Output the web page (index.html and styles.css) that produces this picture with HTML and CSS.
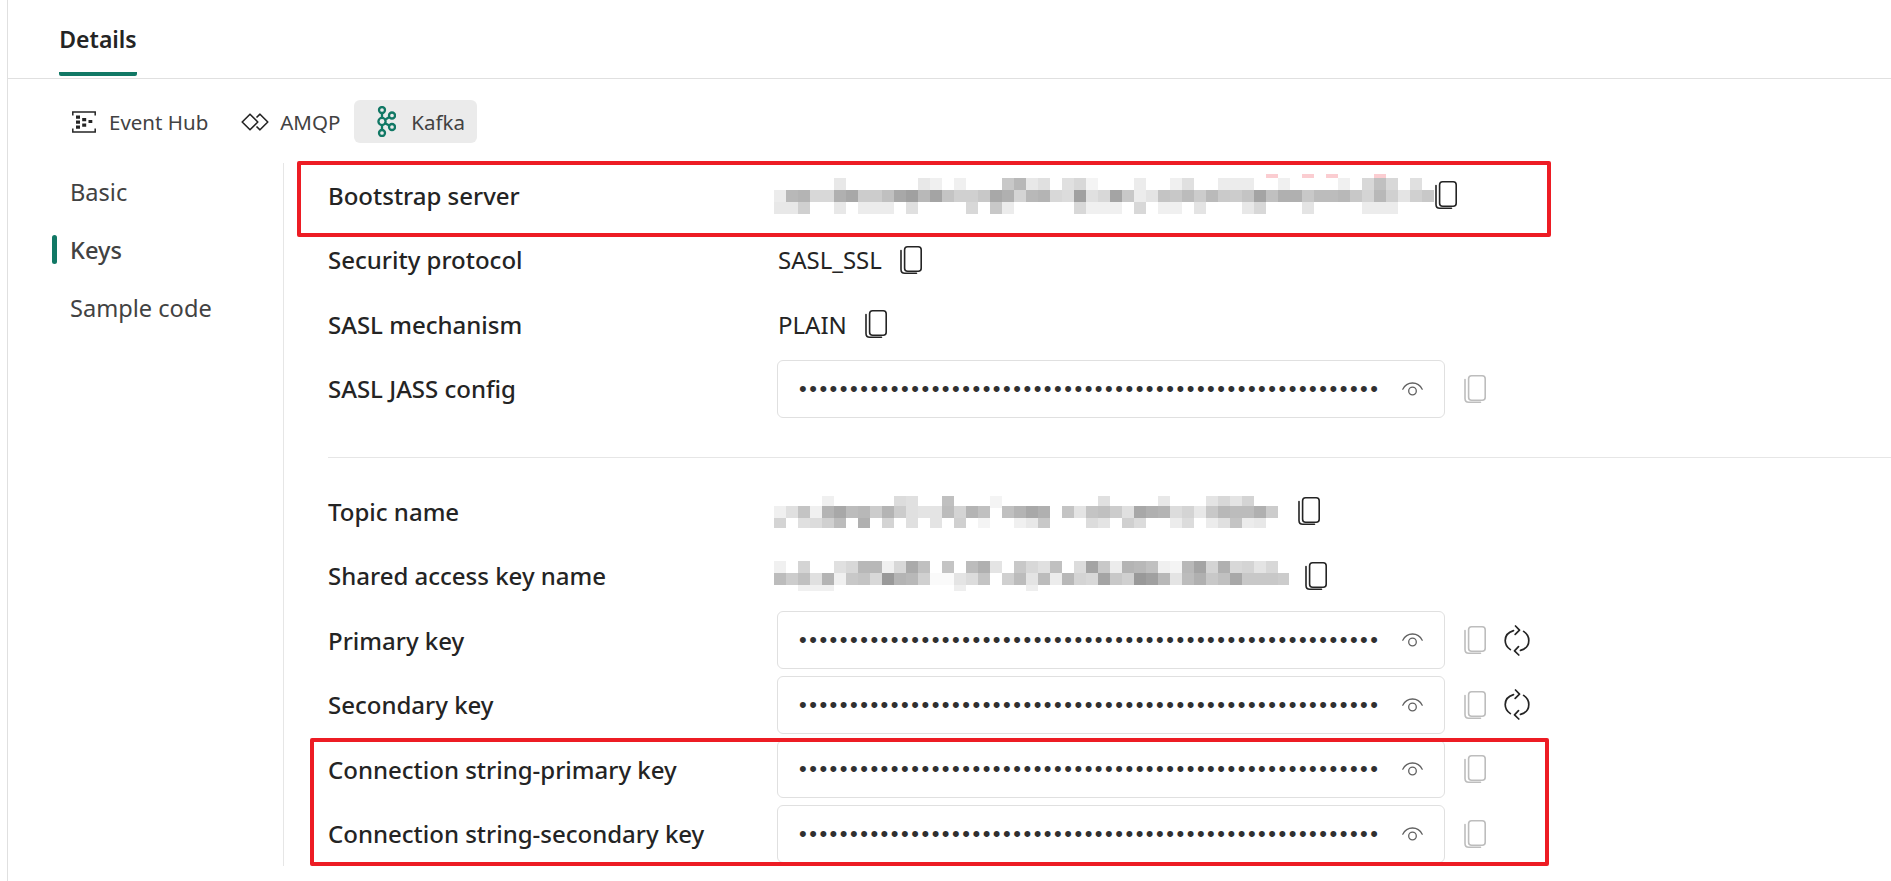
FILE: index.html
```html
<!DOCTYPE html>
<html lang="en">
<head>
    <meta charset="UTF-8">
    <title>Details</title>
    <link rel="stylesheet" href="styles.css">
</head>
<body>
    <svg class="defs" width="0" height="0">
        <symbol id="copy" viewBox="0 0 22 28">
            <rect x="4.6" y="0.8" width="16.6" height="24.4" rx="3" fill="none" stroke="currentColor" stroke-width="1.6"/>
            <path d="M1 4.5V23.5C1 25.8 2.6 27.2 4.8 27.2H16.5" fill="none" stroke="currentColor" stroke-width="1.6" stroke-linecap="round"/>
        </symbol>
        <symbol id="eye" viewBox="0 0 21 14">
            <path d="M0.8 7.2C2.8 3.2 6.2 1 10.5 1C14.8 1 18.2 3.2 20.2 7.2" fill="none" stroke="currentColor" stroke-width="1.3" stroke-linecap="round"/>
            <circle cx="10.5" cy="9" r="3.8" fill="none" stroke="currentColor" stroke-width="1.3"/>
        </symbol>
        <symbol id="refresh" viewBox="0 0 26 31">
            <path d="M9.5 5.6C4.6 7 1.2 10.6 1.2 15.6C1.2 19.4 3.2 22.6 6.4 24.6" fill="none" stroke="currentColor" stroke-width="1.7" stroke-linecap="round"/>
            <path d="M16.5 25.4C21.4 24 24.8 20.4 24.8 15.4C24.8 11.6 22.8 8.4 19.6 6.4" fill="none" stroke="currentColor" stroke-width="1.7" stroke-linecap="round"/>
            <path d="M11.5 1L15.5 5.2L11.2 9.4M14.5 21.6L10.5 25.8L14.8 30" fill="none" stroke="currentColor" stroke-width="1.7" stroke-linecap="round" stroke-linejoin="round"/>
        </symbol>
    </svg>

    <div class="page">
        <div class="tab-strip">
            <div class="tab-main">Details</div>
        </div>

        <div class="sub-tabs">
            <div class="sub-tab">
                <svg class="ic-hub" viewBox="0 0 24 22" fill="none" stroke="#242424" stroke-width="1.5">
                    <path d="M0.8 4.5V1H23.2V4.5M0.8 17.5V21H23.2V17.5"/>
                    <path d="M4 4.5h4v3.2H4zM4 9.5h4v3.2H4zM4 14.5h4v3.2H4zM10.2 7h4v3.2h-4zM10.2 12.5h4v3.2h-4zM16.5 9h3.8v3h-3.8z" fill="#242424" stroke="none"/>
                </svg>
                Event Hub
            </div>
            <div class="sub-tab">
                <svg class="ic-amqp" viewBox="0 0 28 18" fill="none" stroke="#242424" stroke-width="1.6" stroke-linejoin="round">
                    <path d="M9 1.2L16.8 9L9 16.8L1.2 9Z"/>
                    <path d="M15.5 4.5L19 1.2L26.8 9L19 16.8L15.5 13.5"/>
                </svg>
                AMQP
            </div>
            <div class="sub-tab selected">
                <svg class="ic-kafka" viewBox="0 0 20 31" fill="none" stroke="#117865" stroke-width="2.3">
                    <circle cx="6" cy="4" r="3"/>
                    <circle cx="6" cy="15.5" r="3.6"/>
                    <circle cx="6" cy="27" r="3"/>
                    <circle cx="16" cy="9.5" r="3"/>
                    <circle cx="16" cy="21" r="3"/>
                    <path d="M6 7V12M6 19V24M9 13.8L13.4 11M9 17.2L13.4 19.6"/>
                </svg>
                Kafka
            </div>
        </div>

        <div class="body">
            <nav class="side-nav">
                <div class="nav-item">Basic</div>
                <div class="nav-item active">Keys</div>
                <div class="nav-item">Sample code</div>
            </nav>

            <main class="fields">
                <div class="field">
                    <div class="field-label">Bootstrap server</div>
                    <div class="field-value">
                        <svg class="blur" width="661" height="42" viewBox="0 0 661 42">
                            <g class="pink"><rect x="492" y="0"/><rect x="528" y="0"/><rect x="552" y="0"/><rect x="600" y="0"/></g>
                            <rect x="60" y="4" fill="#e8e8e8"/><rect x="144" y="4" fill="#e8e8e8"/><rect x="156" y="4" fill="#f0f0f0"/><rect x="180" y="4" fill="#f0f0f0"/><rect x="228" y="4" fill="#c8c8c8"/><rect x="240" y="4" fill="#b8b8b8"/><rect x="252" y="4" fill="#e8e8e8"/><rect x="264" y="4" fill="#e0e0e0"/><rect x="288" y="4" fill="#e0e0e0"/><rect x="300" y="4" fill="#d8d8d8"/><rect x="312" y="4" fill="#f4f4f4"/><rect x="360" y="4" fill="#ececec"/><rect x="396" y="4" fill="#f0f0f0"/><rect x="408" y="4" fill="#e0e0e0"/><rect x="444" y="4" fill="#ececec"/><rect x="456" y="4" fill="#ececec"/><rect x="468" y="4" fill="#ececec"/><rect x="504" y="4" fill="#f0f0f0"/><rect x="564" y="4" fill="#f0f0f0"/><rect x="588" y="4" fill="#d8d8d8"/><rect x="600" y="4" fill="#c0c0c0"/><rect x="612" y="4" fill="#d8d8d8"/><rect x="636" y="4" fill="#e0e0e0"/>
                            <rect x="0" y="16" fill="#ececec"/><rect x="12" y="16" fill="#b8b8b8"/><rect x="24" y="16" fill="#b4b4b4"/><rect x="36" y="16" fill="#d8d8d8"/><rect x="48" y="16" fill="#d8d8d8"/><rect x="60" y="16" fill="#b0b0b0"/><rect x="72" y="16" fill="#a8a8a8"/><rect x="84" y="16" fill="#cccccc"/><rect x="96" y="16" fill="#cccccc"/><rect x="108" y="16" fill="#c0c0c0"/><rect x="120" y="16" fill="#a8a8a8"/><rect x="132" y="16" fill="#a0a0a0"/><rect x="144" y="16" fill="#b8b8b8"/><rect x="156" y="16" fill="#a4a4a4"/><rect x="168" y="16" fill="#c4c4c4"/><rect x="180" y="16" fill="#d0d0d0"/><rect x="192" y="16" fill="#d0d0d0"/><rect x="204" y="16" fill="#c8c8c8"/><rect x="216" y="16" fill="#a8a8a8"/><rect x="228" y="16" fill="#b0b0b0"/><rect x="240" y="16" fill="#d4d4d4"/><rect x="252" y="16" fill="#b8b8b8"/><rect x="264" y="16" fill="#b4b4b4"/><rect x="276" y="16" fill="#d8d8d8"/><rect x="288" y="16" fill="#dcdcdc"/><rect x="300" y="16" fill="#a0a0a0"/><rect x="312" y="16" fill="#e0e0e0"/><rect x="324" y="16" fill="#d8d8d8"/><rect x="336" y="16" fill="#a4a4a4"/><rect x="348" y="16" fill="#c8c8c8"/><rect x="360" y="16" fill="#ececec"/><rect x="372" y="16" fill="#e4e4e4"/><rect x="384" y="16" fill="#c4c4c4"/><rect x="396" y="16" fill="#c8c8c8"/><rect x="408" y="16" fill="#bcbcbc"/><rect x="420" y="16" fill="#cccccc"/><rect x="432" y="16" fill="#bababa"/><rect x="444" y="16" fill="#cacaca"/><rect x="456" y="16" fill="#cccccc"/><rect x="468" y="16" fill="#c4c4c4"/><rect x="480" y="16" fill="#a4a4a4"/><rect x="492" y="16" fill="#c0c0c0"/><rect x="504" y="16" fill="#b0b0b0"/><rect x="516" y="16" fill="#b0b0b0"/><rect x="528" y="16" fill="#c8c8c8"/><rect x="540" y="16" fill="#bcbcbc"/><rect x="552" y="16" fill="#bcbcbc"/><rect x="564" y="16" fill="#b8b8b8"/><rect x="576" y="16" fill="#c8c8c8"/><rect x="588" y="16" fill="#d4d4d4"/><rect x="600" y="16" fill="#b8b8b8"/><rect x="612" y="16" fill="#d0d0d0"/><rect x="624" y="16" fill="#e4e4e4"/><rect x="636" y="16" fill="#d0d0d0"/><rect x="648" y="16" fill="#c8c8c8"/>
                            <rect x="0" y="28" fill="#e8e8e8"/><rect x="12" y="28" fill="#e8e8e8"/><rect x="24" y="28" fill="#d0d0d0"/><rect x="60" y="28" fill="#e8e8e8"/><rect x="84" y="28" fill="#ececec"/><rect x="96" y="28" fill="#ececec"/><rect x="108" y="28" fill="#ececec"/><rect x="132" y="28" fill="#e0e0e0"/><rect x="192" y="28" fill="#d8d8d8"/><rect x="216" y="28" fill="#c8c8c8"/><rect x="228" y="28" fill="#ececec"/><rect x="300" y="28" fill="#d8d8d8"/><rect x="312" y="28" fill="#f0f0f0"/><rect x="324" y="28" fill="#f0f0f0"/><rect x="336" y="28" fill="#f0f0f0"/><rect x="360" y="28" fill="#d8d8d8"/><rect x="384" y="28" fill="#f0f0f0"/><rect x="396" y="28" fill="#f0f0f0"/><rect x="420" y="28" fill="#e4e4e4"/><rect x="468" y="28" fill="#e8e8e8"/><rect x="480" y="28" fill="#d8d8d8"/><rect x="528" y="28" fill="#e4e4e4"/><rect x="588" y="28" fill="#ececec"/><rect x="600" y="28" fill="#ececec"/><rect x="612" y="28" fill="#ececec"/>
                        </svg>
                        <svg class="ic-copy"><use href="#copy"/></svg>
                    </div>
                </div>
                <div class="field">
                    <div class="field-label">Security protocol</div>
                    <div class="field-value"><span class="plain-value">SASL_SSL</span><svg class="ic-copy gap"><use href="#copy"/></svg></div>
                </div>
                <div class="field">
                    <div class="field-label">SASL mechanism</div>
                    <div class="field-value"><span class="plain-value">PLAIN</span><svg class="ic-copy gap"><use href="#copy"/></svg></div>
                </div>
                <div class="field">
                    <div class="field-label">SASL JASS config</div>
                    <div class="field-value">
                        <div class="secret">
                            <div class="dots">•••••••••••••••••••••••••••••••••••••••••••••••••••••••••</div>
                            <svg class="ic-eye"><use href="#eye"/></svg>
                        </div>
                        <svg class="ic-copy off"><use href="#copy"/></svg>
                    </div>
                </div>

                <hr class="divider">

                <div class="field">
                    <div class="field-label">Topic name</div>
                    <div class="field-value">
                        <svg class="blur" width="506" height="34" viewBox="0 0 506 34">
                            <rect x="48" y="2" fill="#f0f0f0"/><rect x="120" y="2" fill="#dcdcdc"/><rect x="132" y="2" fill="#e0e0e0"/><rect x="168" y="2" fill="#c0c0c0"/><rect x="216" y="2" fill="#f4f4f4"/><rect x="324" y="2" fill="#e0e0e0"/><rect x="384" y="2" fill="#e8e8e8"/><rect x="432" y="2" fill="#e4e4e4"/><rect x="444" y="2" fill="#d8d8d8"/><rect x="456" y="2" fill="#e4e4e4"/><rect x="468" y="2" fill="#d4d4d4"/>
                            <rect x="0" y="12" fill="#f0f0f0"/><rect x="12" y="12" fill="#e0e0e0"/><rect x="24" y="12" fill="#c4c4c4"/><rect x="36" y="12" fill="#f0f0f0"/><rect x="48" y="12" fill="#b4b4b4"/><rect x="60" y="12" fill="#a8a8a8"/><rect x="72" y="12" fill="#bcbcbc"/><rect x="84" y="12" fill="#b8b8b8"/><rect x="96" y="12" fill="#cccccc"/><rect x="108" y="12" fill="#b4b4b4"/><rect x="120" y="12" fill="#cccccc"/><rect x="132" y="12" fill="#e0e0e0"/><rect x="144" y="12" fill="#e4e4e4"/><rect x="156" y="12" fill="#e4e4e4"/><rect x="168" y="12" fill="#bcbcbc"/><rect x="180" y="12" fill="#d4d4d4"/><rect x="192" y="12" fill="#b4b4b4"/><rect x="204" y="12" fill="#c0c0c0"/><rect x="228" y="12" fill="#c0c0c0"/><rect x="240" y="12" fill="#b4b4b4"/><rect x="252" y="12" fill="#a8a8a8"/><rect x="264" y="12" fill="#b0b0b0"/><rect x="288" y="12" fill="#c4c4c4"/><rect x="300" y="12" fill="#e4e4e4"/><rect x="312" y="12" fill="#c4c4c4"/><rect x="324" y="12" fill="#c0c0c0"/><rect x="336" y="12" fill="#cccccc"/><rect x="348" y="12" fill="#e0e0e0"/><rect x="360" y="12" fill="#a8a8a8"/><rect x="372" y="12" fill="#b0b0b0"/><rect x="384" y="12" fill="#b4b4b4"/><rect x="396" y="12" fill="#dcdcdc"/><rect x="408" y="12" fill="#d4d4d4"/><rect x="420" y="12" fill="#e8e8e8"/><rect x="432" y="12" fill="#c8c8c8"/><rect x="444" y="12" fill="#b8b8b8"/><rect x="456" y="12" fill="#bcbcbc"/><rect x="468" y="12" fill="#bcbcbc"/><rect x="480" y="12" fill="#b0b0b0"/><rect x="492" y="12" fill="#cccccc"/>
                            <rect x="0" y="24" fill="#d4d4d4"/><rect x="24" y="24" fill="#e0e0e0"/><rect x="36" y="24" fill="#dcdcdc"/><rect x="48" y="24" fill="#d0d0d0"/><rect x="60" y="24" fill="#bcbcbc"/><rect x="84" y="24" fill="#b0b0b0"/><rect x="108" y="24" fill="#d4d4d4"/><rect x="132" y="24" fill="#e0e0e0"/><rect x="156" y="24" fill="#e4e4e4"/><rect x="180" y="24" fill="#d0d0d0"/><rect x="204" y="24" fill="#f4f4f4"/><rect x="240" y="24" fill="#f0f0f0"/><rect x="252" y="24" fill="#e8e8e8"/><rect x="264" y="24" fill="#c8c8c8"/><rect x="312" y="24" fill="#dcdcdc"/><rect x="324" y="24" fill="#e4e4e4"/><rect x="348" y="24" fill="#d0d0d0"/><rect x="360" y="24" fill="#dcdcdc"/><rect x="396" y="24" fill="#ececec"/><rect x="408" y="24" fill="#dcdcdc"/><rect x="432" y="24" fill="#ececec"/><rect x="444" y="24" fill="#e0e0e0"/><rect x="456" y="24" fill="#c4c4c4"/><rect x="468" y="24" fill="#ececec"/><rect x="480" y="24" fill="#e8e8e8"/>
                        </svg>
                        <svg class="ic-copy gap"><use href="#copy"/></svg>
                    </div>
                </div>
                <div class="field">
                    <div class="field-label">Shared access key name</div>
                    <div class="field-value">
                        <svg class="blur" width="515" height="34" viewBox="0 0 515 34">
                            <rect x="0" y="2" fill="#f0f0f0"/><rect x="24" y="2" fill="#d4d4d4"/><rect x="60" y="2" fill="#e0e0e0"/><rect x="72" y="2" fill="#d8d8d8"/><rect x="84" y="2" fill="#b8b8b8"/><rect x="96" y="2" fill="#b8b8b8"/><rect x="108" y="2" fill="#f0f0f0"/><rect x="120" y="2" fill="#d8d8d8"/><rect x="132" y="2" fill="#aaaaaa"/><rect x="144" y="2" fill="#c0c0c0"/><rect x="168" y="2" fill="#c4c4c4"/><rect x="192" y="2" fill="#bcbcbc"/><rect x="204" y="2" fill="#b0b0b0"/><rect x="216" y="2" fill="#e4e4e4"/><rect x="240" y="2" fill="#c8c8c8"/><rect x="252" y="2" fill="#d8d8d8"/><rect x="264" y="2" fill="#e0e0e0"/><rect x="276" y="2" fill="#c0c0c0"/><rect x="300" y="2" fill="#dcdcdc"/><rect x="312" y="2" fill="#a4a4a4"/><rect x="324" y="2" fill="#c8c8c8"/><rect x="336" y="2" fill="#ececec"/><rect x="348" y="2" fill="#b4b4b4"/><rect x="360" y="2" fill="#b8b8b8"/><rect x="372" y="2" fill="#c0c0c0"/><rect x="384" y="2" fill="#f0f0f0"/><rect x="396" y="2" fill="#f4f4f4"/><rect x="408" y="2" fill="#b8b8b8"/><rect x="420" y="2" fill="#a4a4a4"/><rect x="432" y="2" fill="#d4d4d4"/><rect x="444" y="2" fill="#b0b0b0"/><rect x="456" y="2" fill="#d8d8d8"/><rect x="468" y="2" fill="#d4d4d4"/><rect x="480" y="2" fill="#e4e4e4"/><rect x="492" y="2" fill="#d8d8d8"/>
                            <rect x="0" y="14" fill="#bcbcbc"/><rect x="12" y="14" fill="#cccccc"/><rect x="24" y="14" fill="#c0c0c0"/><rect x="36" y="14" fill="#e0e0e0"/><rect x="48" y="14" fill="#b4b4b4"/><rect x="60" y="14" fill="#f0f0f0"/><rect x="72" y="14" fill="#c8c8c8"/><rect x="84" y="14" fill="#c4c4c4"/><rect x="96" y="14" fill="#d8d8d8"/><rect x="108" y="14" fill="#999999"/><rect x="120" y="14" fill="#b4b4b4"/><rect x="132" y="14" fill="#b8b8b8"/><rect x="144" y="14" fill="#d0d0d0"/><rect x="156" y="14" fill="#fafafa"/><rect x="168" y="14" fill="#fafafa"/><rect x="180" y="14" fill="#e4e4e4"/><rect x="192" y="14" fill="#dcdcdc"/><rect x="204" y="14" fill="#c4c4c4"/><rect x="228" y="14" fill="#d0d0d0"/><rect x="240" y="14" fill="#bcbcbc"/><rect x="252" y="14" fill="#e4e4e4"/><rect x="264" y="14" fill="#bcbcbc"/><rect x="276" y="14" fill="#ececec"/><rect x="288" y="14" fill="#b8b8b8"/><rect x="300" y="14" fill="#d4d4d4"/><rect x="312" y="14" fill="#d8d8d8"/><rect x="324" y="14" fill="#a4a4a4"/><rect x="336" y="14" fill="#c8c8c8"/><rect x="348" y="14" fill="#d0d0d0"/><rect x="360" y="14" fill="#999999"/><rect x="372" y="14" fill="#a0a0a0"/><rect x="384" y="14" fill="#b8b8b8"/><rect x="396" y="14" fill="#e4e4e4"/><rect x="408" y="14" fill="#bcbcbc"/><rect x="420" y="14" fill="#b0b0b0"/><rect x="432" y="14" fill="#c8c8c8"/><rect x="444" y="14" fill="#c0c0c0"/><rect x="456" y="14" fill="#a8a8a8"/><rect x="468" y="14" fill="#c8c8c8"/><rect x="480" y="14" fill="#c8c8c8"/><rect x="492" y="14" fill="#c8c8c8"/><rect x="504" y="14" width="11" fill="#cccccc"/>
                            <g class="thin"><rect x="24" y="26" fill="#f0f0f0"/><rect x="36" y="26" fill="#f0f0f0"/><rect x="48" y="26" fill="#f0f0f0"/><rect x="180" y="26" fill="#eeeeee"/><rect x="252" y="26" fill="#eeeeee"/></g>
                        </svg>
                        <svg class="ic-copy gap-wide"><use href="#copy"/></svg>
                    </div>
                </div>
                <div class="field">
                    <div class="field-label">Primary key</div>
                    <div class="field-value">
                        <div class="secret">
                            <div class="dots">•••••••••••••••••••••••••••••••••••••••••••••••••••••••••</div>
                            <svg class="ic-eye"><use href="#eye"/></svg>
                        </div>
                        <svg class="ic-copy off"><use href="#copy"/></svg>
                        <svg class="ic-refresh"><use href="#refresh"/></svg>
                    </div>
                </div>
                <div class="field">
                    <div class="field-label">Secondary key</div>
                    <div class="field-value">
                        <div class="secret">
                            <div class="dots">•••••••••••••••••••••••••••••••••••••••••••••••••••••••••</div>
                            <svg class="ic-eye"><use href="#eye"/></svg>
                        </div>
                        <svg class="ic-copy off"><use href="#copy"/></svg>
                        <svg class="ic-refresh"><use href="#refresh"/></svg>
                    </div>
                </div>
                <div class="field">
                    <div class="field-label">Connection string-primary key</div>
                    <div class="field-value">
                        <div class="secret">
                            <div class="dots">•••••••••••••••••••••••••••••••••••••••••••••••••••••••••</div>
                            <svg class="ic-eye"><use href="#eye"/></svg>
                        </div>
                        <svg class="ic-copy off"><use href="#copy"/></svg>
                    </div>
                </div>
                <div class="field">
                    <div class="field-label">Connection string-secondary key</div>
                    <div class="field-value">
                        <div class="secret">
                            <div class="dots">•••••••••••••••••••••••••••••••••••••••••••••••••••••••••</div>
                            <svg class="ic-eye"><use href="#eye"/></svg>
                        </div>
                        <svg class="ic-copy off"><use href="#copy"/></svg>
                    </div>
                </div>
            </main>
        </div>
    </div>

    <!-- red annotation boxes drawn over the screenshot -->
    <div class="mark mark-top"></div>
    <div class="mark mark-bottom"></div>
</body>
</html>
```

FILE: styles.css
```css
html, body {
    margin: 0;
    height: 881px;
    overflow: hidden;
    background-color: #ffffff;
}
body {
    position: relative;
    font-family: "Noto Sans", "Open Sans", sans-serif;
    color: #242424;
}
.defs {
    position: absolute;
}
.page {
    margin-left: 7px;
    height: 881px;
    border-left: 1px solid #e0e0e0;
}
.tab-strip {
    height: 79px;
    padding-left: 51px;
    border-bottom: 1px solid #e0e0e0;
    box-sizing: border-box;
}
.tab-main {
    width: 78px;
    height: 76px;
    line-height: 78px;
    font-size: 23px;
    font-weight: 600;
    text-align: center;
    border-bottom: 4px solid #117865;
    border-radius: 2px;
    box-sizing: border-box;
}
.sub-tabs {
    display: flex;
    align-items: center;
    height: 43px;
    margin-top: 21px;
    padding-left: 64px;
}
.sub-tab {
    display: flex;
    align-items: center;
    height: 43px;
    font-size: 20.5px;
    color: #424242;
    margin-right: 33px;
}
.sub-tab.selected {
    padding: 0 12px 0 22px;
    margin-left: -19px;
    margin-right: 0;
    background-color: #ebebeb;
    border-radius: 6px;
}
.ic-hub {
    width: 24px;
    height: 22px;
    margin-right: 13px;
}
.ic-amqp {
    width: 28px;
    height: 18px;
    margin-right: 11px;
}
.ic-kafka {
    width: 20px;
    height: 31px;
    margin-right: 15px;
}
.body {
    display: flex;
    margin-top: 20px;
}
.side-nav {
    width: 276px;
    height: 703px;
    padding-top: 10px;
    box-sizing: border-box;
    border-right: 1px solid #e6e6e6;
}
.nav-item {
    position: relative;
    height: 58px;
    line-height: 38px;
    padding-left: 62px;
    font-size: 23.6px;
    color: #424242;
}
.nav-item.active {
    font-weight: 500;
}
.nav-item.active::before {
    content: "";
    position: absolute;
    left: 44px;
    top: 4px;
    width: 5px;
    height: 29px;
    border-radius: 3px;
    background-color: #117865;
}
.fields {
    flex: 1;
    padding-left: 44px;
}
.field {
    display: flex;
    align-items: center;
    height: 64.5px;
}
.field-label {
    width: 449px;
    flex: none;
    font-size: 24px;
    font-weight: 500;
    color: #242424;
}
.field-value {
    display: flex;
    align-items: center;
    font-size: 24px;
    color: #242424;
}
.plain-value {
    margin-left: 1px;
}
.divider {
    margin: 36px 0 21px;
    border: none;
    border-top: 1px solid #e6e6e6;
}
.secret {
    display: flex;
    align-items: center;
    width: 668px;
    height: 58px;
    padding-left: 21px;
    box-sizing: border-box;
    border: 1px solid #e0e0e0;
    border-radius: 6px;
}
.dots {
    width: 581px;
    flex: none;
    white-space: nowrap;
    font-family: "Liberation Sans", sans-serif;
    font-size: 22px;
    letter-spacing: 2.5px;
    color: #303030;
}
.ic-eye {
    width: 21px;
    height: 14px;
    margin-left: 22px;
    color: #616161;
}
.ic-copy {
    width: 22px;
    height: 28px;
    flex: none;
    color: #242424;
}
.ic-copy.gap {
    margin-left: 18px;
}
.ic-copy.gap-wide {
    margin-left: 16px;
}
.ic-copy.off {
    margin-left: 19px;
    color: #bdbdbd;
}
.ic-refresh {
    width: 26px;
    height: 31px;
    margin-left: 18px;
    color: #242424;
}
/* pixelated redaction over the secret values */
.blur {
    flex: none;
    display: block;
    margin-left: -3px;
}
.blur rect {
    width: 12px;
    height: 12px;
}
.blur .pink rect {
    height: 4px;
    fill: #fbcdd1;
}
.blur .thin rect {
    height: 6px;
}
.mark {
    position: absolute;
    border: 4px solid #ed1c24;
    border-radius: 2px;
    box-sizing: border-box;
}
.mark-top {
    left: 297px;
    top: 161px;
    width: 1254px;
    height: 76px;
}
.mark-bottom {
    left: 310px;
    top: 738px;
    width: 1239px;
    height: 128px;
}
```
